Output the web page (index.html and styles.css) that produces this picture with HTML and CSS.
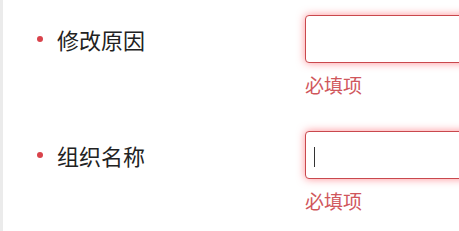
FILE: index.html
```html
<!DOCTYPE html>
<html lang="zh-CN">
<head>
    <meta charset="UTF-8">
    <meta name="viewport" content="width=device-width, initial-scale=1.0">
    <title>表单</title>
    <link rel="stylesheet" href="styles.css">
</head>
<body>
    <div class="page">
        <div class="form-row">
            <div class="form-label">
                <span class="required-dot"></span>
                <span>修改原因</span>
            </div>
            <div class="form-field">
                <div class="text-input"></div>
                <p class="error-text">必填项</p>
            </div>
        </div>

        <div class="form-row">
            <div class="form-label">
                <span class="required-dot"></span>
                <span>组织名称</span>
            </div>
            <div class="form-field">
                <div class="text-input"><span class="caret"></span></div>
                <p class="error-text">必填项</p>
            </div>
        </div>
    </div>
</body>
</html>
```

FILE: styles.css
```css
html, body {
    margin: 0;
    padding: 0;
    background: #fff;
    overflow: hidden;
}

body {
    font-family: "Noto Sans CJK SC", "Noto Sans", sans-serif;
    color: #222;
}

.page {
    border-left: 3px solid #ebebeb;
    min-height: 231px;
    overflow: hidden;
}

.form-row {
    display: flex;
    align-items: flex-start;
    height: 116px;
    padding-top: 15px;
    box-sizing: border-box;
}

.form-label {
    width: 302px;
    flex-shrink: 0;
    height: 48px;
    display: flex;
    align-items: center;
    padding-left: 34px;
    box-sizing: border-box;
    font-size: 22px;
}

.required-dot {
    width: 6px;
    height: 6px;
    border-radius: 50%;
    background: #d9434b;
    margin-right: 14px;
}

.form-field {
    flex-shrink: 0;
    width: 260px;
}

.text-input {
    height: 48px;
    box-sizing: border-box;
    border: 1px solid #c9484d;
    border-radius: 4px;
    box-shadow: 0 0 8px rgba(255, 70, 80, 0.6);
    background: #fff;
    display: flex;
    align-items: center;
    padding-left: 8px;
}

.caret {
    width: 1px;
    height: 20px;
    background: #333;
    margin-top: 4px;
}

.error-text {
    margin: 12px 0 0;
    font-size: 19px;
    line-height: 20px;
    color: #d0575c;
}
```
